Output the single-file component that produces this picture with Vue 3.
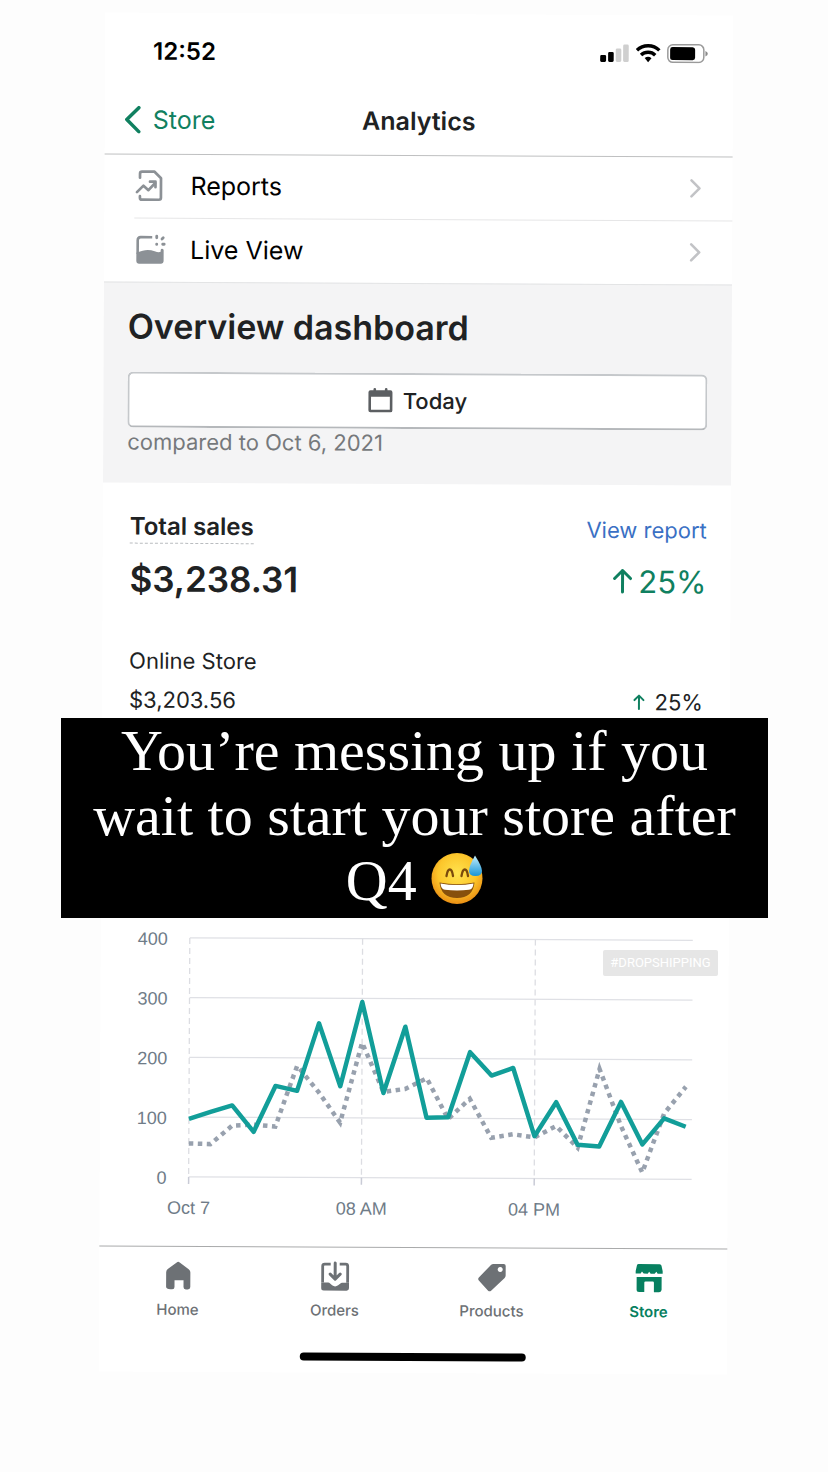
<script setup>
const chart = { left: 89, right: 592, base: 259, unit: 0.5975, step: 21.6 }

const today = [97, 109, 120, 76, 153, 145, 258, 153, 294, 142, 253, 101, 102, 211, 172, 185, 71, 128, 57, 54, 129, 58, 102, 88]
const previous = [56, 55, 86, 88, 85, 187, 143, 92, 226, 144, 149, 167, 99, 133, 68, 74, 69, 88, 52, 184, 89, 11, 110, 155]

const yOf = (value) => chart.base - value * chart.unit
const xOf = (hour) => chart.left + hour * chart.step
const toPoints = (series) => series.map((v, i) => `${xOf(i).toFixed(1)},${yOf(v).toFixed(1)}`).join(' ')

const yTicks = [400, 300, 200, 100, 0]
const xTicks = [
  { hour: 0, label: 'Oct 7' },
  { hour: 8, label: '08 AM' },
  { hour: 16, label: '04 PM' },
]
</script>

<template>
  <div class="story">
    <main class="phone">
      <div class="status">
        <span class="clock">12:52</span>
        <svg class="status-icons" viewBox="0 0 108 20" aria-hidden="true">
          <rect x="0" y="12" width="6" height="7" rx="1.4" fill="#000" />
          <rect x="8" y="9" width="5.6" height="10" rx="1.4" fill="#000" />
          <rect x="15.6" y="5.5" width="5.6" height="13.5" rx="1.4" fill="#cfcfcf" />
          <rect x="23" y="1.5" width="5.6" height="17.5" rx="1.4" fill="#cfcfcf" />
          <g fill="none" stroke="#000" stroke-width="3.4">
            <path d="M36.8 7.2a16 16 0 0 1 22.4 0" />
            <path d="M40.9 12a10.2 10.2 0 0 1 14.2 0" />
          </g>
          <path d="M44.6 15a5.6 5.6 0 0 1 6.8 0L48 19z" fill="#000" />
          <rect x="67.7" y="1.5" width="36" height="17.6" rx="5" fill="none" stroke="#9a9a9a" stroke-width="1.5" />
          <rect x="70" y="3.8" width="25" height="13" rx="2.5" fill="#000" />
          <path d="M105.3 7.5q2.4 1 2.4 2.8t-2.4 2.8z" fill="#8b8b8b" />
        </svg>
      </div>

      <header class="nav">
        <button class="back" type="button">
          <svg viewBox="0 0 18 28" aria-hidden="true"><path d="M15 2 3 14l12 12" fill="none" stroke="currentColor" stroke-width="3.5" stroke-linecap="round" stroke-linejoin="round" /></svg>
          Store
        </button>
        <h1>Analytics</h1>
      </header>

      <div class="rows">
        <a class="row" href="#reports">
          <svg class="row-icon" viewBox="0 0 32 32" aria-hidden="true">
            <g fill="none" stroke="#8c9196" stroke-width="2.7" stroke-linecap="round" stroke-linejoin="round">
              <path d="M5.500 8V4q0-2 2-2H20L26.500 8.500V28q0 2-2 2H7.500q-2 0-2-2V26.500" />
              <path d="M2.500 22.500 9 16l5 4.500 6.500-7" />
              <path d="M15.500 12h5.500v5.500" />
            </g>
          </svg>
          <span>Reports</span>
          <svg class="chevron" viewBox="0 0 12 20" aria-hidden="true"><path d="m2 2 8 8-8 8" fill="none" stroke="#c2c3c6" stroke-width="2.6" stroke-linecap="round" stroke-linejoin="round" /></svg>
        </a>
        <a class="row" href="#live">
          <svg class="row-icon" viewBox="0 0 32 32" aria-hidden="true">
            <path d="M18 3.500H6.500Q3.500 3.500 3.500 6.500V20" fill="none" stroke="#8c9196" stroke-width="2.6" />
            <path d="M2.200 19Q5 18 8.500 17q6-1.500 12 .5 4 1.500 6 .5V16.500q0-1.500 1.500-1.500t1.500 1.500V27.500q0 2.500-2.500 2.500H4.700q-2.500 0-2.500-2.500z" fill="#8c9196" />
            <g fill="none" stroke="#8c9196" stroke-width="2.8" stroke-linecap="round"><path d="M22.500 2.500v1.500M27.800 5.300l1.200-1.200M28.500 10.500h1.500M22.500 10.300v.4" /></g>
          </svg>
          <span>Live View</span>
          <svg class="chevron" viewBox="0 0 12 20" aria-hidden="true"><path d="m2 2 8 8-8 8" fill="none" stroke="#c2c3c6" stroke-width="2.6" stroke-linecap="round" stroke-linejoin="round" /></svg>
        </a>
      </div>

      <section class="overview">
        <h2>Overview dashboard</h2>
        <button class="period" type="button">
          <svg viewBox="0 0 26 26" aria-hidden="true">
            <path fill-rule="evenodd" d="M6 1.500q0-1.300 1.300-1.300T8.600 1.500V2.500h8.800V1.500q0-1.300 1.300-1.300T20 1.500v1h3q2 0 2 2V22.500q0 2-2 2H3q-2 0-2-2V4.500q0-2 2-2h3zM3.600 9v12.900h18.800V9z" fill="#5c5f62" />
          </svg>
          Today
        </button>
        <p>compared to Oct 6, 2021</p>
      </section>

      <section class="sales">
        <div class="line">
          <h3>Total sales</h3>
          <a href="#report">View report</a>
        </div>
        <div class="line total">
          <strong>$3,238.31</strong>
          <span class="growth">
            <svg viewBox="0 0 20 26" aria-hidden="true"><path d="M10 24V2.500M2 10.500l8-8 8 8" fill="none" stroke="currentColor" stroke-width="3" stroke-linecap="round" stroke-linejoin="round" /></svg>
            25%
          </span>
        </div>
        <p class="channel">Online Store</p>
        <div class="line detail">
          <span>$3,203.56</span>
          <span class="growth-small">
            <svg viewBox="0 0 12 16" aria-hidden="true"><path d="M6 14.800V2M1.500 6 6 1.500 10.500 6" fill="none" stroke="#108060" stroke-width="2" stroke-linecap="round" stroke-linejoin="round" /></svg>
            25%
          </span>
        </div>
      </section>

      <svg class="chart" viewBox="0 0 628 310" role="img" aria-label="Sales by hour">
        <g v-for="tick in yTicks" :key="tick">
          <line :x1="chart.left" :x2="chart.right" :y1="yOf(tick)" :y2="yOf(tick)" stroke="#dfe0e5" stroke-width="1.3" />
          <text x="67" :y="yOf(tick) + 7" text-anchor="end">{{ tick }}</text>
        </g>
        <g v-for="tick in xTicks" :key="tick.hour">
          <line :x1="xOf(tick.hour)" :x2="xOf(tick.hour)" :y1="yOf(400)" :y2="chart.base" stroke="#dcdde2" stroke-width="1.3" stroke-dasharray="6 4" />
          <line :x1="xOf(tick.hour)" :x2="xOf(tick.hour)" :y1="chart.base" :y2="chart.base + 7" stroke="#c9cbd6" stroke-width="1.5" />
          <text :x="xOf(tick.hour)" y="296" text-anchor="middle">{{ tick.label }}</text>
        </g>
        <polyline :points="toPoints(previous)" fill="none" stroke="#98a1ae" stroke-width="4.5" stroke-dasharray="4.5 4.5" />
        <polyline :points="toPoints(today)" fill="none" stroke="#129e99" stroke-width="4.5" stroke-linejoin="round" />
      </svg>

      <nav class="tabs">
        <button type="button">
          <svg viewBox="0 0 32 32" aria-hidden="true"><path d="M14.500 2.600q1.500-1.200 3 0l9 6.700q1.700 1.400 1.700 3.400V27q0 2.500-2.500 2.500h-2q-2.300 0-2.300-2.300V20.500h-9v6.700q0 2.300-2.300 2.300h-1.800Q4 29.500 4 27V12.700q0-2 1.600-3.400z" fill="currentColor" /></svg>
          Home
        </button>
        <button type="button">
          <svg viewBox="0 0 32 32" aria-hidden="true">
            <path d="M11.500 3.500H5.500q-2 0-2 2V22M20.500 3.500h6q2 0 2 2V22" fill="none" stroke="currentColor" stroke-width="2.8" />
            <path d="M2.100 22H9q1.200 0 2 1l2 1.700q3 2.300 6 0l2-1.700q.8-1 2-1h6.900V27.500q0 2.500-2.500 2.500H4.600q-2.500 0-2.500-2.500z" fill="currentColor" />
            <path d="M16 2.500V18M11 13.500l5 5 5-5" fill="none" stroke="currentColor" stroke-width="3" stroke-linecap="round" stroke-linejoin="round" />
          </svg>
          Orders
        </button>
        <button type="button">
          <svg viewBox="0 0 32 32" aria-hidden="true"><path fill-rule="evenodd" d="M17 2.500h10.500q2 0 2 2V14q0 1.500-1 2.500L15 29.300q-1.500 1.300-3 0L2.700 19.200q-1.300-1.500 0-3L15 3.300q1-.8 2-.8zM24 5.500a2.500 2.500 0 1 0 .01 0z" fill="currentColor" /></svg>
          Products
        </button>
        <button class="active" type="button">
          <svg viewBox="0 0 32 32" aria-hidden="true">
            <path d="M5.500 2h21q1.500 0 1.800 1.500L29.500 9v2.500H24.500L23.200 9.500 21.500 11.500H17.500L16 9.500 14.500 11.500H10.500L8.800 9.500 7.500 11.500H2.500V9L3.700 3.500Q4 2 5.500 2z" fill="currentColor" />
            <path d="M3.500 14.800h25V27.500q0 2.500-2.500 2.500h-5.200V20.500q0-1.200-1.200-1.200h-7.200q-1.200 0-1.200 1.200V30H6q-2.500 0-2.500-2.500z" fill="currentColor" />
          </svg>
          Store
        </button>
      </nav>
      <div class="home-bar"></div>
    </main>

    <span class="hashtag">#DROPSHIPPING</span>

    <p class="caption">
      You’re messing up if you<br />wait to start your store after<br />Q4
      <svg class="emoji" viewBox="0 0 52 52" role="img" aria-label="Grinning face with sweat">
        <defs>
          <radialGradient id="face" cx=".5" cy=".4" r=".62">
            <stop offset="0" stop-color="#ffe34f" />
            <stop offset=".6" stop-color="#fcc62b" />
            <stop offset="1" stop-color="#e98a12" />
          </radialGradient>
          <linearGradient id="drop" x1="0" y1="0" x2="0" y2="1">
            <stop offset="0" stop-color="#c5effc" />
            <stop offset="1" stop-color="#1795d8" />
          </linearGradient>
        </defs>
        <circle cx="26" cy="26.5" r="25.5" fill="url(#face)" />
        <path d="M15.500 24q1-6.500 3.300-6.500T22 24M30.500 24q1-6.500 3.300-6.500T37 24" fill="none" stroke="#7a4a0c" stroke-width="2.3" stroke-linecap="round" />
        <path d="M8.500 30.500Q26 34 43.500 30.500 42 46 26 46T8.500 30.500z" fill="#87500c" />
        <path d="M9.500 31.500Q26 34.500 42.500 31.500q-.5 6-4.500 6.300-12 1.200-24 0-4-.3-4.500-6.300z" fill="#fff" />
        <path d="M44 3.500q7 11 7 15.500 0 5-6.500 5T38 19q0-5 6-15.500z" fill="url(#drop)" />
      </svg>
    </p>
  </div>
</template>

<style>
body {
  margin: 0;
  background: #fdfdfd;
}
</style>

<style scoped>
.story {
  position: relative;
  box-sizing: border-box;
  padding: 14px 0 98px 3px;
  background: #fdfdfd;
  font-family: Inter, "Liberation Sans", sans-serif;
  color: #202223;
  overflow: hidden;
}
.phone {
  width: 77%;
  max-width: 628px;
  margin: 0 auto;
  padding-bottom: 12px;
  background: #fff;
  transform: rotate(0.28deg);
}
h1, h2, h3, p {
  margin: 0;
  font-weight: 600;
}
button {
  border: 0;
  padding: 0;
  background: none;
  font: inherit;
  color: inherit;
}
a {
  color: inherit;
  text-decoration: none;
}
svg {
  display: block;
  flex: none;
}
.status {
  display: flex;
  align-items: center;
  justify-content: space-between;
  height: 74px;
  padding: 2px 25px 0 48px;
  box-sizing: border-box;
}
.clock {
  font-size: 24px;
  font-weight: 600;
  color: #000;
}
.status-icons {
  width: 108px;
  height: 20px;
}
.nav {
  display: grid;
  grid-template-columns: 1fr auto 1fr;
  align-items: center;
  height: 68px;
  padding: 0 19px 2px;
  box-sizing: border-box;
  border-bottom: 1px solid #bfc0c1;
}
.back {
  justify-self: start;
  display: flex;
  align-items: center;
  gap: 11px;
  font-size: 25px;
  color: #108060;
}
.back svg {
  width: 18px;
  height: 28px;
}
h1 {
  font-size: 25px;
}
.row {
  display: flex;
  align-items: center;
  height: 64px;
  box-sizing: border-box;
  margin-left: 30px;
  padding: 0 31px 2px 0;
  border-bottom: 1px solid #e6e6e7;
  font-size: 25px;
  color: #000;
}
.row:last-child {
  height: 63px;
  border-bottom: 0;
}
.row-icon {
  width: 32px;
  height: 32px;
  margin-right: 24px;
}
.row span {
  flex: 1;
}
.chevron {
  width: 12px;
  height: 20px;
}
.overview {
  padding: 24px 24px 27px;
  background: #f4f4f5;
  border-top: 1px solid #e3e4e5;
}
h2 {
  font-size: 34px;
  line-height: 40px;
}
.period {
  display: flex;
  align-items: center;
  justify-content: center;
  gap: 9px;
  width: 100%;
  height: 56px;
  margin-top: 25px;
  box-sizing: border-box;
  border: 2px solid #c5c8cb;
  border-bottom-color: #b5b8bb;
  border-radius: 6px;
  background: #fff;
  font-size: 22px;
  font-weight: 500;
}
.period svg {
  width: 26px;
  height: 26px;
}
.overview p {
  font-size: 22px;
  line-height: 28px;
  font-weight: 400;
  color: #76797c;
}
.sales {
  padding: 28px 24px 0 27px;
}
.line {
  display: flex;
  align-items: center;
  justify-content: space-between;
}
h3 {
  font-size: 24px;
  line-height: 32px;
  border-bottom: 1px dashed #b9bcbf;
}
.line a {
  font-size: 22px;
  color: #3a70c4;
}
.total {
  height: 44px;
  margin-top: 13px;
}
.total strong {
  font-size: 35px;
  font-weight: 600;
}
.growth {
  display: flex;
  align-items: center;
  gap: 6px;
  font-size: 31px;
  color: #108060;
}
.growth svg {
  width: 20px;
  height: 26px;
}
.channel {
  margin-top: 45px;
  font-size: 22px;
  line-height: 30px;
  font-weight: 400;
}
.detail {
  margin-top: 9px;
  padding-right: 3px;
  font-size: 22px;
  line-height: 30px;
}
.growth-small {
  display: flex;
  align-items: center;
  gap: 10px;
}
.growth-small svg {
  width: 12px;
  height: 16px;
}
.chart {
  width: 100%;
  margin-top: 203px;
  font-family: "Liberation Sans", Arial, sans-serif;
  font-size: 18px;
}
.chart text {
  fill: #6f7c88;
}
.tabs {
  display: grid;
  grid-template-columns: repeat(4, 1fr);
  margin-top: 18px;
  padding-top: 13px;
  border-top: 1px solid #a9aaab;
  font-size: 15px;
  line-height: 20px;
  font-weight: 500;
  color: #6d7175;
}
.tabs button {
  display: flex;
  flex-direction: column;
  align-items: center;
  gap: 8px;
}
.tabs svg {
  width: 32px;
  height: 32px;
}
.tabs .active {
  color: #078060;
  font-weight: 600;
}
.home-bar {
  width: 36%;
  height: 8px;
  margin: 32px auto 0;
  border-radius: 4px;
  background: #000;
}
.hashtag {
  position: absolute;
  top: 950px;
  left: 603px;
  width: 115px;
  border-radius: 2px;
  background: #e6e6e6;
  color: #fff;
  font-family: Roboto, sans-serif;
  font-size: 13px;
  line-height: 26px;
  text-align: center;
}
.caption {
  position: absolute;
  top: 718px;
  left: 61px;
  right: 60px;
  padding: 0 0 5px;
  background: #000;
  color: #fff;
  font-family: "Liberation Serif", "Times New Roman", serif;
  font-size: 58px;
  line-height: 65px;
  font-weight: 400;
  text-align: center;
}
.emoji {
  display: inline-block;
  width: 52px;
  height: 52px;
  vertical-align: -4px;
}
</style>
